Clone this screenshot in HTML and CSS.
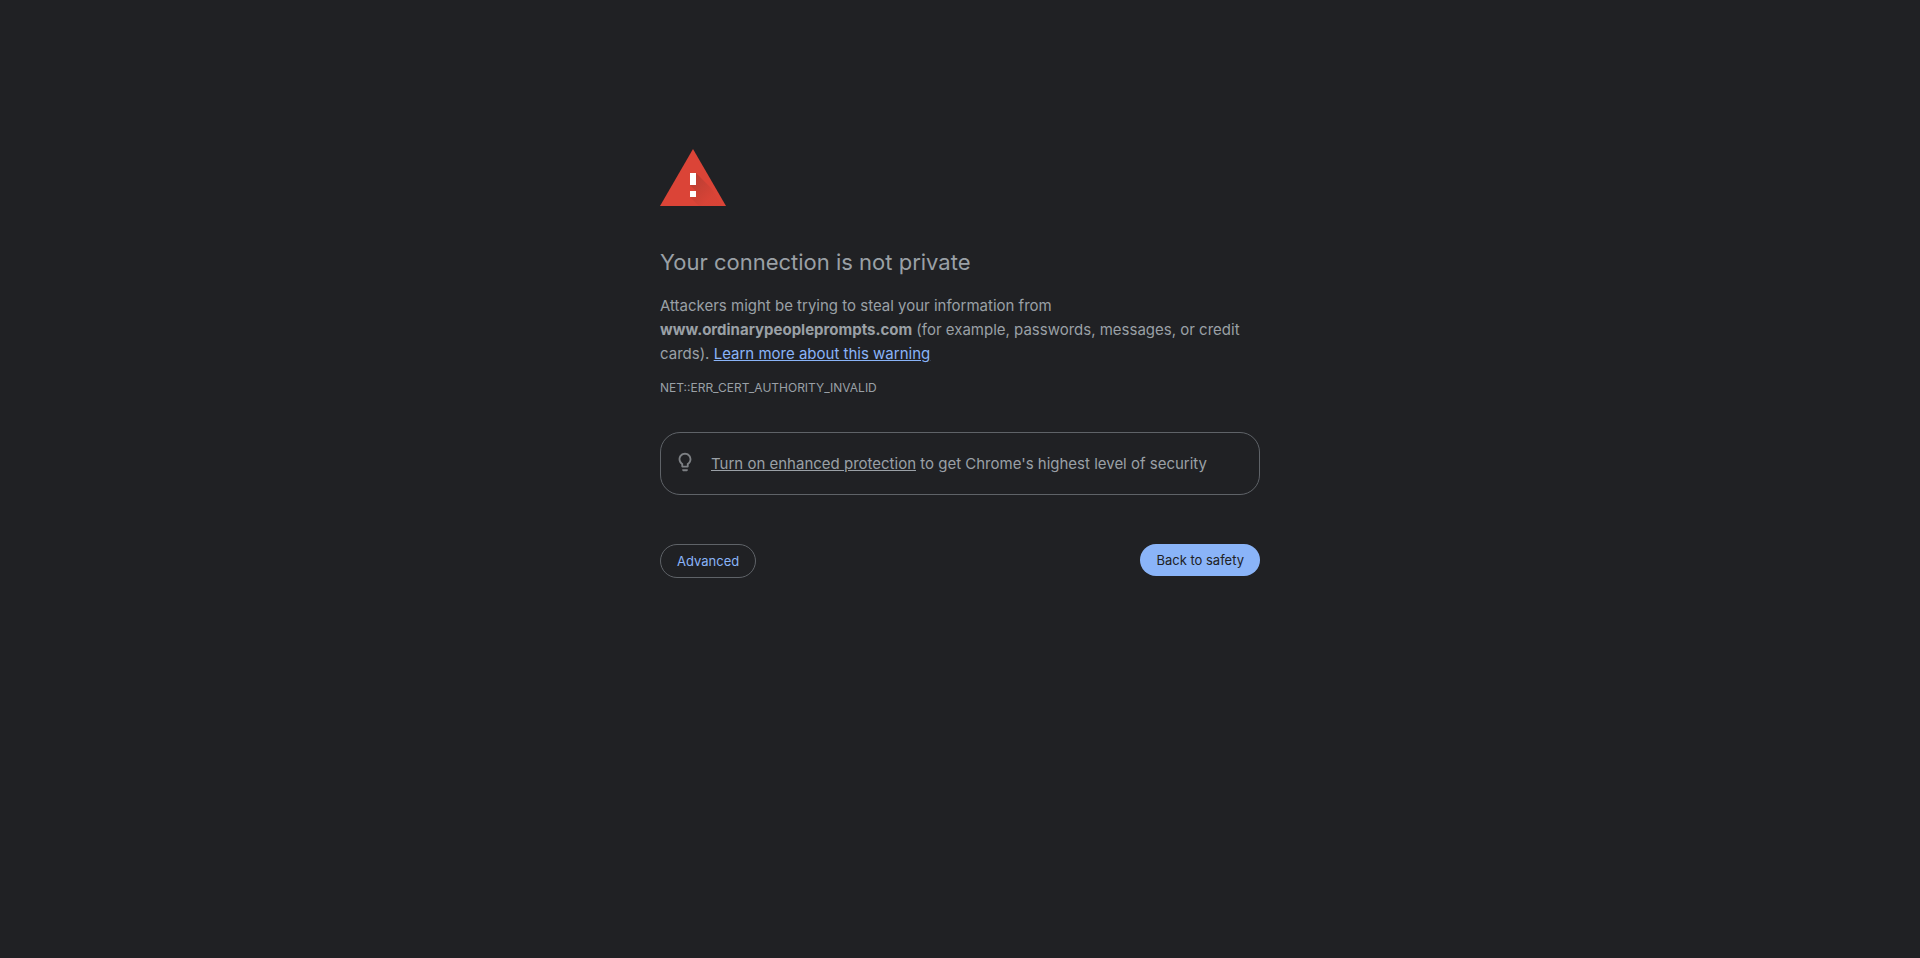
FILE: index.html
```html
<!DOCTYPE html>
<html lang="en">
<head>
    <meta charset="UTF-8">
    <meta name="viewport" content="width=device-width, initial-scale=1.0">
    <title>Privacy error</title>
    <link rel="stylesheet" href="styles.css">
</head>
<body>
    <main class="interstitial">
        <svg class="icon" viewBox="0 0 66 57" aria-hidden="true">
            <defs>
                <linearGradient id="shadow" gradientUnits="userSpaceOnUse" x1="33" y1="30" x2="51" y2="48">
                    <stop offset="0" stop-color="#3e2723" stop-opacity="0.2"/>
                    <stop offset="1" stop-color="#3e2723" stop-opacity="0.02"/>
                </linearGradient>
            </defs>
            <path fill="#db4437" d="M33 0l33 57H0z"/>
            <path fill="url(#shadow)" d="M36 24l16 16 10 17H39l-9-9 6-6-6-6 6-6z"/>
            <path fill="#fff" d="M30 24h6v12h-6zM30 42h6v6h-6z"/>
        </svg>

        <h1>Your connection is not private</h1>
        <p class="message">Attackers might be trying to steal your information from <strong>www.ordinarypeopleprompts.com</strong> (for example, passwords, messages, or credit cards). <a href="#">Learn more about this warning</a></p>
        <div class="error-code">NET::ERR_CERT_AUTHORITY_INVALID</div>

        <div class="enhanced-protection">
            <svg class="bulb" viewBox="0 0 24 24" aria-hidden="true">
                <path fill="currentColor" d="M9 21c0 .55.45 1 1 1h4c.55 0 1-.45 1-1v-1H9v1zm3-19C8.14 2 5 5.14 5 9c0 2.38 1.19 4.47 3 5.74V17c0 .55.45 1 1 1h6c.55 0 1-.45 1-1v-2.26c1.81-1.27 3-3.36 3-5.74 0-3.86-3.14-7-7-7zm2.85 11.1l-.85.6V16h-4v-2.3l-.85-.6A4.997 4.997 0 0 1 7 9c0-2.76 2.24-5 5-5s5 2.24 5 5c0 1.63-.8 3.16-2.15 4.1z"/>
            </svg>
            <p><a href="#">Turn on enhanced protection</a> to get Chrome's highest level of security</p>
        </div>

        <div class="buttons">
            <button type="button" class="secondary">Advanced</button>
            <button type="button" class="primary">Back to safety</button>
        </div>
    </main>
</body>
</html>
```
FILE: styles.css
```css
body {
    margin: 0;
    background: #202124;
    color: #9aa0a6;
    font-family: Inter, "Liberation Sans", sans-serif;
    font-size: 15px;
    line-height: 24px;
}

.interstitial {
    box-sizing: border-box;
    max-width: 600px;
    margin: 0 auto;
    padding-top: 149px;
}

.icon {
    display: block;
    width: 66px;
    height: 57px;
    margin-bottom: 40px;
}

h1 {
    margin: 0 0 16px;
    font-size: 22px;
    font-weight: 400;
    line-height: 32px;
}

p {
    margin: 0;
}

.message a {
    color: #8ab4f8;
}

.error-code {
    margin-top: 12px;
    font-size: 12px;
    line-height: 20px;
}

.enhanced-protection {
    display: flex;
    align-items: flex-start;
    gap: 15px;
    margin-top: 34px;
    padding: 18px 13px;
    border: 1px solid #5f6368;
    border-radius: 20px;
}

.enhanced-protection p {
    padding-top: 1px;
}

.enhanced-protection a {
    color: inherit;
}

.bulb {
    flex: none;
    width: 22px;
    height: 22px;
    color: #7d8084;
}

.buttons {
    display: flex;
    justify-content: space-between;
    align-items: flex-start;
    margin-top: 49px;
}

button {
    padding: 8px 16px;
    border: 0;
    border-radius: 20px;
    font-family: inherit;
    font-size: 13px;
    line-height: 16px;
    cursor: pointer;
}

.secondary {
    border: 1px solid #5f6368;
    background: transparent;
    color: #8ab4f8;
}

.primary {
    background: #8ab4f8;
    color: #202124;
}
```
